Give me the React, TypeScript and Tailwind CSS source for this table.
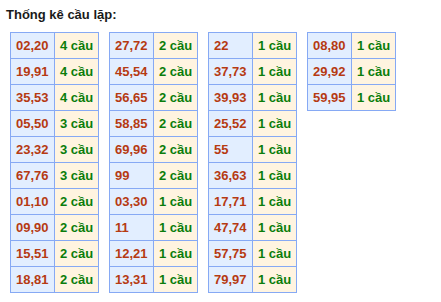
import React from 'react';

type Row = [string, number];

// cặp số lặp và số cầu tương ứng, chia theo từng cột
const columns: Row[][] = [
  [['02,20', 4], ['19,91', 4], ['35,53', 4], ['05,50', 3], ['23,32', 3], ['67,76', 3], ['01,10', 2], ['09,90', 2], ['15,51', 2], ['18,81', 2]],
  [['27,72', 2], ['45,54', 2], ['56,65', 2], ['58,85', 2], ['69,96', 2], ['99', 2], ['03,30', 1], ['11', 1], ['12,21', 1], ['13,31', 1]],
  [['22', 1], ['37,73', 1], ['39,93', 1], ['25,52', 1], ['55', 1], ['36,63', 1], ['17,71', 1], ['47,74', 1], ['57,75', 1], ['79,97', 1]],
  [['08,80', 1], ['29,92', 1], ['59,95', 1]],
];

const CauTable: React.FC<{ rows: Row[] }> = ({ rows }) => (
  <table className="w-[89px] table-fixed border-collapse">
    <tbody>
      {rows.map(([pair, count], i) => (
        <tr key={i}>
          <td className="w-1/2 border border-[#86a9f4] bg-[#e2eeff] px-[5px] py-0 text-left leading-[25px] text-[#b63a12] whitespace-nowrap">
            {pair}
          </td>
          <td className="w-1/2 border border-[#86a9f4] bg-[#fff4e0] px-[5px] py-0 text-left leading-[25px] text-[#0b7d0b] whitespace-nowrap">
            {count} cầu
          </td>
        </tr>
      ))}
    </tbody>
  </table>
);

export default function App() {
  return (
    <div className="min-h-[302px] w-[441px] bg-white font-['Liberation_Sans',Arial,sans-serif] text-[13px] font-bold">
      <h3 className="pl-[6px] pt-[7px] text-[13px] font-bold leading-[15px] text-[#1a1a1a]">Thống kê cầu lặp:</h3>
      <div className="mt-[10px] flex items-start gap-[10px] pl-[10px]">
        {columns.map((rows, i) => (
          <CauTable key={i} rows={rows} />
        ))}
      </div>
    </div>
  );
}
